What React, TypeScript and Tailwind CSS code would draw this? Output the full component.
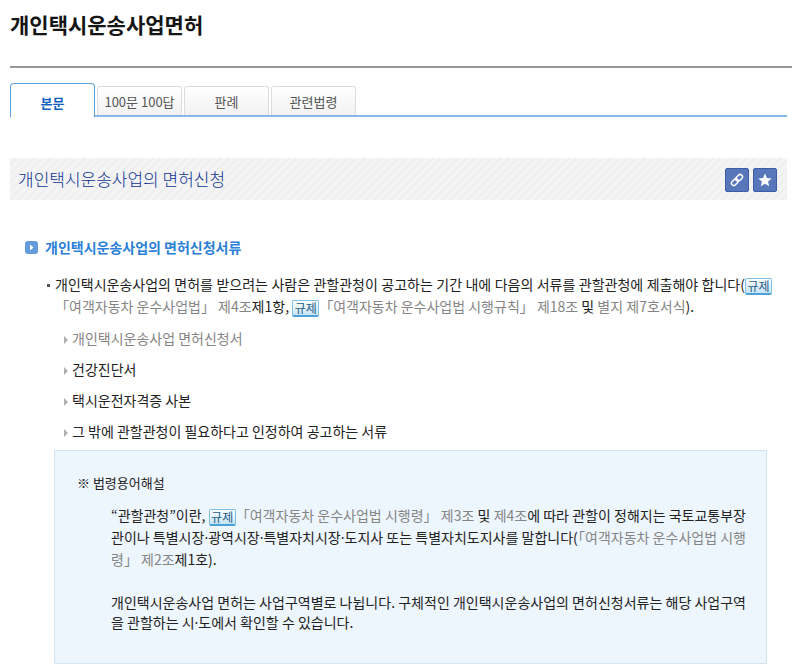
import type { ReactNode } from "react";

const tabs = ["100문 100답", "판례", "관련법령"];

function Law({ children }: { children: ReactNode }) {
  return (
    <a href="#law" className="text-[#858585]">
      {children}
    </a>
  );
}

function Badge() {
  return (
    <a
      href="#regulation"
      className="inline-flex h-[17px] w-[27px] items-center justify-center rounded-[2px] border border-[#7fc0e6] border-b-2 border-b-[#4aa2d8] bg-linear-to-b from-white to-[#c5e3f5] align-middle text-[12px] leading-[14px] text-[#255f87] [text-align-last:center]"
    >
      규제
    </a>
  );
}

function Dot() {
  return <span className="font-['Noto_Sans',sans-serif] leading-none">·</span>;
}

function Item({ children }: { children: ReactNode }) {
  return (
    <li className="flex items-center gap-1">
      <svg width="5" height="8" viewBox="0 0 5 8" className="mt-1 shrink-0" aria-hidden="true">
        <path d="M1 0L5 4 1 8z" fill="#b0b0b0" />
      </svg>
      <span>{children}</span>
    </li>
  );
}

function Line({ children }: { children: ReactNode }) {
  return <span className="block whitespace-nowrap [text-align-last:justify]">{children}</span>;
}

export default function App() {
  return (
    <main className="bg-white pl-[10px] pb-1 font-['Noto_Sans_CJK_KR','Noto_Sans',sans-serif] text-[14px] leading-[22px] text-[#222]">
      <h1 className="flex h-[66px] items-start pt-2 text-[21px] leading-[32px] font-bold text-[#151515]">
        개인택시운송사업면허
      </h1>
      <div className="mr-2 h-[2px] bg-[#96969c]" />

      <div className="mr-[13px]">
        <nav className="mt-[15px] flex h-[34px] items-end gap-[2px] border-b-2 border-[#86b7ea] text-[13px]">
          <button className="-mb-[2px] h-[34px] w-[85px] rounded-t-[4px] border border-b-0 border-[#5f9fe3] bg-white pt-1 font-bold text-[#0f63c4]">
            본문
          </button>
          {tabs.map((t) => (
            <button
              key={t}
              className="h-[29px] w-[85px] rounded-t-[3px] border border-b-0 border-[#dcdcdc] bg-linear-to-b from-white to-[#f1f1f1] pt-[2px] whitespace-nowrap text-[#555]"
            >
              {t}
            </button>
          ))}
        </nav>

        <header className="mt-[41px] flex h-[42px] items-center justify-between bg-[repeating-linear-gradient(135deg,#f4f4f4_0_4px,#efefef_4px_6px)] pr-[10px] pl-2">
          <h2 className="text-[17px] font-light text-[#0f3592]">개인택시운송사업의 면허신청</h2>
          <div className="flex gap-1 pt-[2px]">
            <button
              aria-label="링크 복사"
              className="grid size-6 place-items-center rounded-[2px] border border-[#3a5da5] bg-[#5877bb]"
            >
              <svg width="14" height="14" viewBox="0 0 24 24" fill="none" stroke="#fff" strokeWidth="2.500" aria-hidden="true">
                <rect x="9" y="4" width="13" height="8" rx="4" transform="rotate(-45 16 8)" />
                <rect x="2" y="12" width="13" height="8" rx="4" transform="rotate(-45 8 16)" />
              </svg>
            </button>
            <button
              aria-label="즐겨찾기"
              className="grid size-6 place-items-center rounded-[2px] border border-[#3a5da5] bg-[#5877bb]"
            >
              <svg width="14" height="14" viewBox="0 0 24 24" fill="#fff" aria-hidden="true">
                <path d="M12 1l3.300 7.500 8.200.8-6.200 5.400 1.800 8L12 18.500 4.900 22.700l1.800-8L.5 9.300l8.200-.8z" />
              </svg>
            </button>
          </div>
        </header>

        <section className="mt-9 pr-[15px] pl-[15px]">
          <h3 className="flex items-center gap-[7px] font-bold text-[#2b7fd6]">
            <svg width="13" height="13" viewBox="0 0 13 13" aria-hidden="true">
              <rect width="13" height="13" rx="3" fill="#649bdb" />
              <path d="M5 3.500L8.500 6.500 5 9.500z" fill="#fff" />
            </svg>
            개인택시운송사업의 면허신청서류
          </h3>

          <div className="mt-[15px] flex gap-[5px] pl-[22px]">
            <span className="mt-[11px] size-[3px] shrink-0 bg-[#555]" />
            <p className="min-w-0 grow">
              <Line>
                개인택시운송사업의 면허를 받으려는 사람은 관할관청이 공고하는 기간 내에 다음의 서류를 관할관청에 제출해야 합니다(
                <Badge />
              </Line>
              <Law>「여객자동차 운수사업법」 제4조</Law>제1항, <Badge />
              <Law>「여객자동차 운수사업법 시행규칙」 제18조</Law> 및 <Law>별지 제7호서식</Law>).
            </p>
          </div>

          <ul className="mt-[10px] space-y-[9px] pl-[38px]">
            <Item>
              <Law>개인택시운송사업 면허신청서</Law>
            </Item>
            <Item>건강진단서</Item>
            <Item>택시운전자격증 사본</Item>
            <Item>그 밖에 관할관청이 필요하다고 인정하여 공고하는 서류</Item>
          </ul>

          <aside className="mt-2 mr-[5px] ml-[29px] border border-[#d3e4f2] bg-[#edf5fd] pt-[21px] pr-5 pb-[31px] pl-[22px]">
            <p className="text-[13px]">※ 법령용어해설</p>
            <div className="mt-[10px] pl-[34px]">
              <p>
                <Line>
                  “관할관청”이란, <Badge />
                  <Law>「여객자동차 운수사업법 시행령」 제3조</Law> 및 <Law>제4조</Law>에 따라 관할이 정해지는 국토교통부장
                </Line>
                <Line>
                  관이나 특별시장
                  <Dot />
                  광역시장
                  <Dot />
                  특별자치시장
                  <Dot />
                  도지사 또는 특별자치도지사를 말합니다(
                  <Law>「여객자동차 운수사업법 시행</Law>
                </Line>
                <Law>령」 제2조</Law>제1호).
              </p>
              <p className="mt-[22px] leading-5">
                <Line>개인택시운송사업 면허는 사업구역별로 나뉩니다. 구체적인 개인택시운송사업의 면허신청서류는 해당 사업구역</Line>
                을 관할하는 시
                <Dot />
                도에서 확인할 수 있습니다.
              </p>
            </div>
          </aside>
        </section>
      </div>
    </main>
  );
}
